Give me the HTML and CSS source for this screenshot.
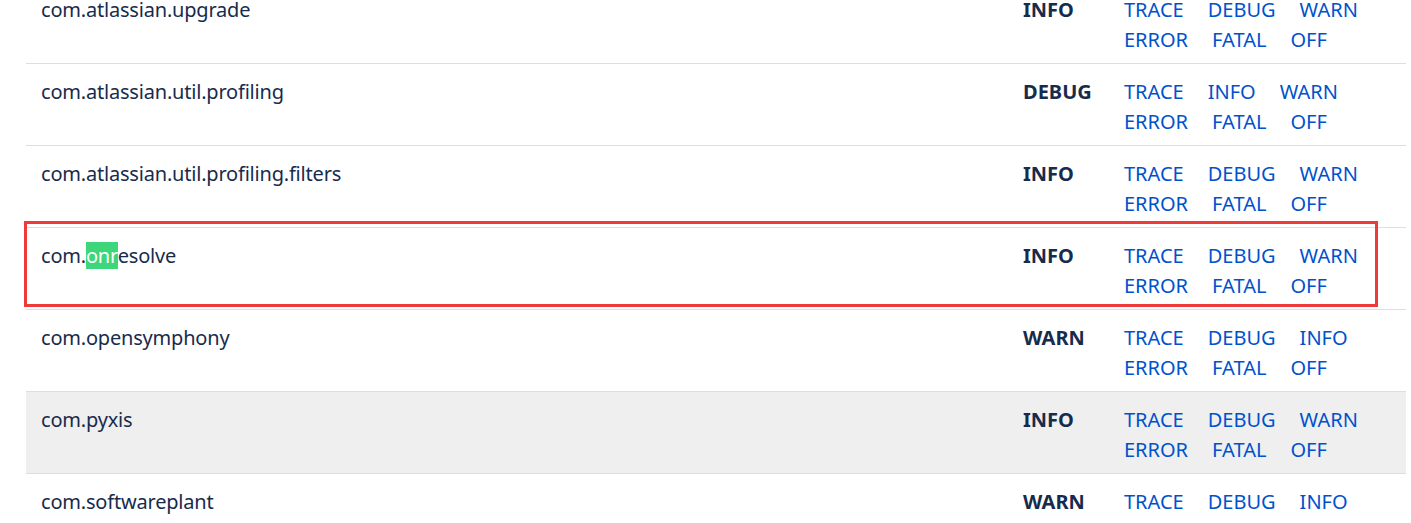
FILE: index.html
```html
<!DOCTYPE html>
<html lang="en">
<head>
    <meta charset="UTF-8">
    <title>Logging levels</title>
    <link rel="stylesheet" href="styles.css">
</head>
<body>
    <div class="levels">
        <div class="row">
            <div class="name">com.atlassian.upgrade</div>
            <div class="current">INFO</div>
            <div class="links"><a>TRACE</a><a>DEBUG</a><a>WARN</a><a>ERROR</a><a>FATAL</a><a>OFF</a></div>
        </div>
        <div class="row">
            <div class="name">com.atlassian.util.profiling</div>
            <div class="current">DEBUG</div>
            <div class="links"><a>TRACE</a><a>INFO</a><a>WARN</a><a>ERROR</a><a>FATAL</a><a>OFF</a></div>
        </div>
        <div class="row">
            <div class="name">com.atlassian.util.profiling.filters</div>
            <div class="current">INFO</div>
            <div class="links"><a>TRACE</a><a>DEBUG</a><a>WARN</a><a>ERROR</a><a>FATAL</a><a>OFF</a></div>
        </div>
        <div class="row marked">
            <div class="name">com.<span class="match">onr</span>esolve</div>
            <div class="current">INFO</div>
            <div class="links"><a>TRACE</a><a>DEBUG</a><a>WARN</a><a>ERROR</a><a>FATAL</a><a>OFF</a></div>
        </div>
        <div class="row">
            <div class="name">com.opensymphony</div>
            <div class="current">WARN</div>
            <div class="links"><a>TRACE</a><a>DEBUG</a><a>INFO</a><a>ERROR</a><a>FATAL</a><a>OFF</a></div>
        </div>
        <div class="row hover">
            <div class="name">com.pyxis</div>
            <div class="current">INFO</div>
            <div class="links"><a>TRACE</a><a>DEBUG</a><a>WARN</a><a>ERROR</a><a>FATAL</a><a>OFF</a></div>
        </div>
        <div class="row">
            <div class="name">com.softwareplant</div>
            <div class="current">WARN</div>
            <div class="links"><a>TRACE</a><a>DEBUG</a><a>INFO</a><a>ERROR</a><a>FATAL</a><a>OFF</a></div>
        </div>
    </div>
</body>
</html>
```

FILE: styles.css
```css
body {
    margin: 0;
    font-family: "Noto Sans", "Open Sans", sans-serif;
    font-size: 20px;
    color: #172b4d;
    background: #ffffff;
    overflow: hidden;
}
.levels {
    margin: -18px 5px 0 26px;
}
.row {
    position: relative;
    display: grid;
    grid-template-columns: 1fr 101px 282px;
    padding: 13px 0 8px;
    border-bottom: 1px solid #dfdfdf;
    line-height: 30px;
}
.row.hover {
    background: #efefef;
}
.name {
    padding-left: 15px;
    letter-spacing: -0.2px;
}
.current {
    font-weight: bold;
}
.links {
    display: flex;
    flex-wrap: wrap;
    column-gap: 24px;
    padding-right: 40px;
}
.links a {
    color: #0052cc;
    cursor: pointer;
}
.match {
    background: #3dd67a;
    color: #ffffff;
}
.marked::after {
    content: "";
    position: absolute;
    left: -2px;
    top: -7px;
    width: 1348px;
    height: 80px;
    border: 3px solid #ef3a3a;
    pointer-events: none;
}
```
